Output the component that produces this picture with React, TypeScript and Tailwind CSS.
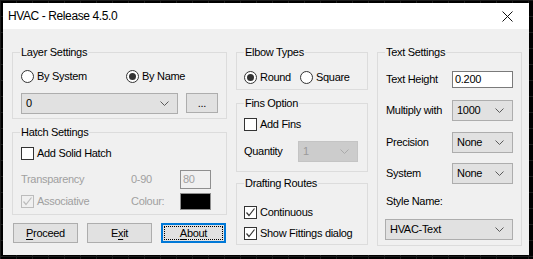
import React from 'react';

const Chevron = ({ color = '#5a5a5a' }: { color?: string }) => (
  <svg width="9" height="5" viewBox="0 0 9 5">
    <path d="M0.5 0.5 L4.5 4.5 L8.5 0.5" fill="none" stroke={color} strokeWidth="1" />
  </svg>
);

const Radio = ({ checked, label }: { checked?: boolean; label: string }) => (
  <div className="flex items-center h-[13px]">
    <div className="w-[13px] h-[13px] rounded-full border border-[#333] bg-white flex items-center justify-center">
      {checked && <div className="w-[7px] h-[7px] rounded-full bg-[#333]" />}
    </div>
    <span className="ml-[3px] leading-[13px]">{label}</span>
  </div>
);

const Check = ({ checked, label, disabled }: { checked?: boolean; label: string; disabled?: boolean }) => (
  <div className="flex items-center h-[13px]">
    <div
      className={`w-[13px] h-[13px] border flex items-center justify-center ${
        disabled ? 'border-[#bcbcbc] bg-[#f0f0f0]' : 'border-[#333] bg-white'
      }`}
    >
      {checked && (
        <svg width="11" height="11" viewBox="0 0 11 11">
          <path d="M1.5 5.5 L4 8.5 L9.5 1.5" fill="none" stroke={disabled ? '#bcbcbc' : '#333'} strokeWidth="1.2" />
        </svg>
      )}
    </div>
    <span className={`ml-[3px] leading-[13px] ${disabled ? 'text-[#a0a0a0]' : ''}`}>{label}</span>
  </div>
);

const Combo = ({ value, className = '', disabled }: { value: string; className?: string; disabled?: boolean }) => (
  <div
    className={`flex items-center justify-between h-[21px] border pl-[4px] pr-[8px] ${
      disabled ? 'border-[#c4c4c4] bg-[#cccccc] text-[#9a9a9a]' : 'border-[#adadad] bg-[#e1e1e1]'
    } ${className}`}
  >
    <span className="leading-[13px]">{value}</span>
    <Chevron color={disabled ? '#aaaaaa' : '#5a5a5a'} />
  </div>
);

const GroupBox = ({ title, className = '', children }: { title: string; className?: string; children?: React.ReactNode }) => (
  <div className={`relative border border-[#dcdcdc] ${className}`}>
    <span className="absolute left-[7px] top-[-7px] bg-[#f0f0f0] px-[1px] leading-[13px]">{title}</span>
    {children}
  </div>
);

const Button = ({ children, focused }: { children: React.ReactNode; focused?: boolean }) => (
  <div
    className={`w-[65px] h-[20px] flex items-center justify-center bg-[#e1e1e1] ${
      focused
        ? 'border-2 border-[#0078d7] outline outline-1 outline-dotted outline-black outline-offset-[-4px]'
        : 'border border-[#adadad]'
    }`}
  >
    <span className="leading-[13px]">{children}</span>
  </div>
);

export default function App() {
  return (
    <div className="w-[533px] h-[259px] bg-black bg-[linear-gradient(#1c1c1c_1px,transparent_1px),linear-gradient(90deg,#1c1c1c_1px,transparent_1px)] bg-[size:16px_16px] pt-[3px] pl-[3px] font-['Liberation_Sans',Arial,sans-serif] text-[11px] tracking-[-0.3px] text-black">
      <div className="w-[526px] h-[252px] flex flex-col bg-[#f0f0f0]">
        {/* TITLE BAR */}
        <div className="h-[26px] bg-white flex items-center justify-between pl-[5px] pr-[16px]">
          <span className="text-[12px] tracking-[-0.4px] leading-[14px]">HVAC - Release 4.5.0</span>
          <svg width="11" height="11" viewBox="0 0 11 11">
            <path d="M0.5 0.5 L10.5 10.5 M10.5 0.5 L0.5 10.5" stroke="#111" strokeWidth="1" />
          </svg>
        </div>

        {/* BODY */}
        <div className="flex-1 flex gap-[9px] pt-[23px] pl-[9px]">
          {/* LEFT */}
          <div className="w-[215px] flex flex-col">
            <GroupBox title="Layer Settings" className="h-[67px] pt-[17px] pl-[8px]">
              <div className="flex">
                <div className="w-[105px]">
                  <Radio label="By System" />
                </div>
                <Radio checked label="By Name" />
              </div>
              <div className="flex mt-[10px] gap-[8px]">
                <Combo value="0" className="w-[157px]" />
                <div className="w-[32px] h-[20px] border border-[#adadad] bg-[#e1e1e1] flex items-center justify-center">
                  <span className="leading-[13px]">...</span>
                </div>
              </div>
            </GroupBox>

            <GroupBox title="Hatch Settings" className="mt-[13px] h-[83px] pt-[14px] pl-[8px]">
              <Check label="Add Solid Hatch" />
              <div className="flex items-center mt-[10px] h-[19px] text-[#a0a0a0]">
                <span className="w-[110px] leading-[13px]">Transparency</span>
                <span className="w-[49px] leading-[13px]">0-90</span>
                <div className="w-[31px] h-[19px] border border-[#8f8f8f] flex items-center pl-[2px]">
                  <span className="leading-[13px]">80</span>
                </div>
              </div>
              <div className="flex items-center mt-[4px] h-[17px]">
                <div className="w-[110px]">
                  <Check checked disabled label="Associative" />
                </div>
                <span className="w-[49px] leading-[13px] text-[#a0a0a0]">Colour:</span>
                <div className="w-[31px] h-[17px] border border-[#8f8f8f] bg-black" />
              </div>
            </GroupBox>

            <div className="flex gap-[9px] mt-[8px] pl-[1px]">
              <Button>
                <span className="underline underline-offset-2">P</span>roceed
              </Button>
              <Button>
                E<span className="underline underline-offset-2">x</span>it
              </Button>
              <Button focused>
                <span className="underline underline-offset-2">A</span>bout
              </Button>
            </div>
          </div>

          {/* MIDDLE */}
          <div className="w-[132px] flex flex-col">
            <GroupBox title="Elbow Types" className="h-[38px] pt-[18px] pl-[7px]">
              <div className="flex">
                <div className="w-[56px]">
                  <Radio checked label="Round" />
                </div>
                <Radio label="Square" />
              </div>
            </GroupBox>

            <GroupBox title="Fins Option" className="mt-[13px] h-[69px] pt-[14px] pl-[7px]">
              <Check label="Add Fins" />
              <div className="flex items-center mt-[10px]">
                <span className="w-[54px] leading-[13px]">Quantity</span>
                <Combo value="1" disabled className="w-[60px]" />
              </div>
            </GroupBox>

            <GroupBox title="Drafting Routes" className="mt-[11px] h-[62px] pt-[22px] pl-[7px]">
              <Check checked label="Continuous" />
              <div className="mt-[8px]">
                <Check checked label="Show Fittings dialog" />
              </div>
            </GroupBox>
          </div>

          {/* RIGHT */}
          <div className="w-[145px] flex flex-col">
            <GroupBox title="Text Settings" className="h-[194px] pt-[18px] pl-[8px]">
              <div className="flex items-center">
                <span className="w-[66px] leading-[13px]">Text Height</span>
                <div className="w-[61px] h-[17px] border border-[#7a7a7a] bg-white flex items-center pl-[2px]">
                  <span className="leading-[13px]">0.200</span>
                </div>
              </div>
              <div className="flex items-center mt-[12px]">
                <span className="w-[66px] leading-[13px]">Multiply with</span>
                <Combo value="1000" className="w-[61px]" />
              </div>
              <div className="flex items-center mt-[11px]">
                <span className="w-[66px] leading-[13px]">Precision</span>
                <Combo value="None" className="w-[61px]" />
              </div>
              <div className="flex items-center mt-[10px]">
                <span className="w-[66px] leading-[13px]">System</span>
                <Combo value="None" className="w-[61px]" />
              </div>
              <div className="mt-[11px] leading-[13px]">Style Name:</div>
              <Combo value="HVAC-Text" className="w-[128px] mt-[11px] -ml-[1px]" />
            </GroupBox>
          </div>
        </div>
      </div>
    </div>
  );
}
